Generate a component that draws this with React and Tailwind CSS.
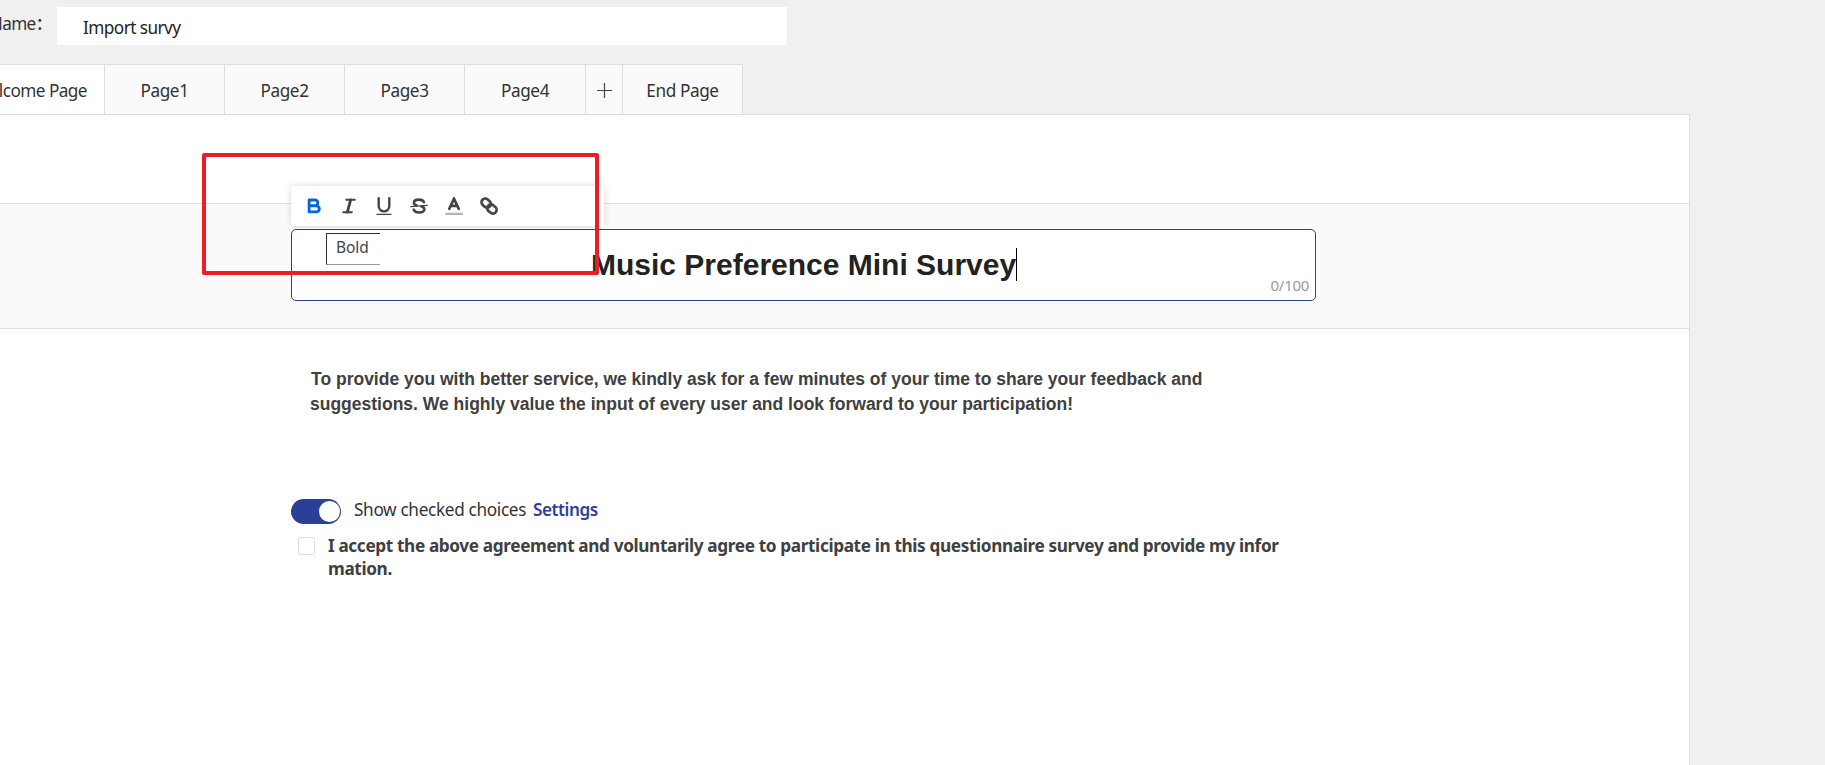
import React from "react";

const SEGOE = "font-['Noto_Sans','Open_Sans','Noto_Sans_CJK_SC',sans-serif]";
const ARIAL = "font-['Liberation_Sans',Arial,sans-serif]";

const tabs = ["Page1", "Page2", "Page3", "Page4"];

function BoldIcon() {
  return (
    <svg width="14" height="16" viewBox="0 0 14 16" fill="none" stroke="#0366d6" strokeWidth="2.8" strokeLinejoin="round">
      <path d="M2.100 2H8a2.800 2.800 0 0 1 0 5.700H2.100zM2.100 7.800h7.200a3 3 0 0 1 0 6.100H2.100z" />
    </svg>
  );
}

function ItalicIcon() {
  return (
    <svg width="14" height="16" viewBox="0 0 14 16" fill="none" stroke="#444" strokeLinecap="round">
      <path d="M4.2 1.700h8.600M1.200 14.300h8.600" strokeWidth="2" />
      <path d="M8.6 2L5.400 14" strokeWidth="2.900" />
    </svg>
  );
}

function UnderlineIcon() {
  return (
    <svg width="16" height="18" viewBox="0 0 16 18" fill="none" stroke="#444" strokeLinecap="round">
      <path d="M2.700 1.300v7.800a5.300 5.300 0 0 0 10.600 0V1.300" strokeWidth="2.400" />
      <path d="M1 17.300h14" strokeWidth="1.300" />
    </svg>
  );
}

function StrikeIcon() {
  return (
    <svg width="18" height="16" viewBox="0 0 18 16" fill="none" stroke="#444" strokeLinecap="round">
      <path d="M14 4.2C13 2.4 11.200 1.600 9 1.600 6 1.600 3.900 2.700 3.900 4.700c0 1.400 1 2.200 2.600 2.600M11.500 8.600c1.800.5 2.900 1.300 2.900 2.700 0 2-2.200 3.200-5.200 3.200-2.600 0-4.700-1-5.500-2.800" strokeWidth="2.600" />
      <path d="M.8 8.600L17.200 7.400" strokeWidth="1.300" />
    </svg>
  );
}

function ColorIcon() {
  return (
    <svg width="18" height="18" viewBox="0 0 18 18" fill="none" strokeLinecap="round">
      <path d="M4.300 11.800L9 1.700 13.700 11.800M6.200 8.900h5.600" stroke="#444" strokeWidth="2.700" />
      <path d="M1.200 16.900h15.600" stroke="#b3b3b3" strokeWidth="2.200" />
    </svg>
  );
}

function LinkIcon() {
  return (
    <svg width="18" height="18" viewBox="0 0 18 18" fill="none" stroke="#444" strokeWidth="2.700">
      <rect x="-5" y="-3.700" width="10" height="7.400" rx="3.700" transform="translate(6.200 6.100) rotate(42)" />
      <rect x="-5" y="-3.700" width="10" height="7.400" rx="3.700" transform="translate(11.900 12) rotate(42)" />
    </svg>
  );
}

const tools = [BoldIcon, ItalicIcon, UnderlineIcon, StrikeIcon, ColorIcon, LinkIcon];

export default function App() {
  return (
    <div className={`flex h-[765px] w-[1825px] flex-col overflow-hidden bg-[#f0f0f0] text-[17.200px] tracking-[-0.400px] text-[#333] ${SEGOE}`}>
      <header className="flex h-16 shrink-0 items-start pt-[7px]">
        <div className="flex h-[38px] w-[57px] shrink-0 justify-end overflow-hidden pr-[5px]">
          <span className="whitespace-nowrap leading-[31px] tracking-[-0.700px]">Name<span lang="zh-CN" className="font-['Noto_Sans_CJK_SC',sans-serif] font-medium">：</span></span>
        </div>
        <div className="flex h-[38px] w-[730px] items-center bg-white pl-[26px] text-[#222]">
          <span className="mt-[3px] whitespace-nowrap leading-[42px] tracking-[-0.550px]">Import survy</span>
        </div>
      </header>

      <nav className="flex h-[50px] w-[743px] shrink-0 border-t border-r border-[#dedede] bg-[#fafafa] leading-[51px]">
        <div className="flex w-[104px] justify-end overflow-hidden bg-white pr-[17px]">
          <span className="whitespace-nowrap tracking-[-0.550px]">Welcome Page</span>
        </div>
        {tabs.map((t, i) => (
          <div key={t} className={`border-l border-[#dedede] text-center ${i === 3 ? "w-[121px]" : "w-[120px]"}`}>{t}</div>
        ))}
        <div className="flex w-[37px] items-center justify-center border-l border-[#dedede] pt-[2px]">
          <svg width="15" height="15" viewBox="0 0 15 15" stroke="#444" strokeWidth="1.200">
            <path d="M0 7.500h15M7.500 0v15" />
          </svg>
        </div>
        <div className="w-[120px] border-l border-[#dedede] text-center">End Page</div>
      </nav>

      <main className="flex w-[1690px] grow flex-col border-t border-r border-[#dedede] bg-white">
        <section className="h-[88px] shrink-0" />
        <section className="relative h-[126px] shrink-0 border-y border-[#dedede] bg-[#fafafa] pt-[25px] pl-[291px]">
          <div className={`relative flex h-[72px] w-[1025px] items-start rounded-[5px] border border-[#2c3f98] bg-white pl-[299px] ${ARIAL}`}>
            <span className="whitespace-nowrap text-[30px] font-bold leading-[69px] tracking-normal text-[#222]">Music Preference Mini Survey</span>
            <span className="mt-[18px] h-[33px] w-px bg-black" />
            <span className={`absolute right-[6px] bottom-[4px] text-[15px] leading-[22px] tracking-[-0.300px] text-[#999] ${SEGOE}`}>0/100</span>
          </div>
          <div className="absolute top-[-18px] left-[291px] flex h-10 w-[313px] items-center bg-white pl-[5px] shadow-[0_0_7px_rgba(0,0,0,0.15)]">
            {tools.map((Icon, i) => (
              <span key={i} className="flex w-[35px] shrink-0 items-center justify-center">
                <Icon />
              </span>
            ))}
          </div>
          <div className="absolute top-[29px] left-[326px] h-8 w-[54px] border-t border-b border-l border-t-[#333] border-b-[#999] border-l-[#333] bg-white pl-[9px] text-[15.500px] leading-[27px] tracking-[-0.100px] text-[#444]">Bold</div>
          <div className="absolute top-[-51px] left-[202px] h-[122px] w-[397px] rounded-[2px] border-4 border-[#ee1c25]" />
        </section>

        <section className="pt-[38px] pl-[310px]">
          <div className={`text-[17.500px] font-bold leading-[25px] tracking-normal text-[#404040] ${ARIAL}`}>
            <p className="pl-px whitespace-nowrap">To provide you with better service, we kindly ask for a few minutes of your time to share your feedback and</p>
            <p className="whitespace-nowrap">suggestions. We highly value the input of every user and look forward to your participation!</p>
          </div>
        </section>

        <section className="flex flex-col pt-[82px] pl-[291px]">
          <div className="flex h-[25px] items-start">
            <span className="flex h-[25px] w-[50px] items-center justify-end rounded-full bg-[#2c3f98] pr-[1px]">
              <span className="h-[21px] w-[21px] rounded-full bg-white" />
            </span>
            <span className="ml-[13px] whitespace-nowrap leading-[21px] tracking-[-0.330px]">Show checked choices</span>
            <span className="ml-[7px] whitespace-nowrap font-semibold leading-[21px] tracking-[-0.500px] text-[#2c3f98]">Settings</span>
          </div>
          <div className="mt-[10px] flex pl-[7px]">
            <span className="mt-[3px] h-[18px] w-[17px] shrink-0 rounded-[2px] border border-[#dcdfe6] bg-white" />
            <div className="ml-[13px] text-[17.200px] font-bold leading-[23px] tracking-[-0.362px] text-[#404040]">
              <p className="whitespace-nowrap">I accept the above agreement and voluntarily agree to participate in this questionnaire survey and provide my infor</p>
              <p>mation.</p>
            </div>
          </div>
        </section>
      </main>
    </div>
  );
}
